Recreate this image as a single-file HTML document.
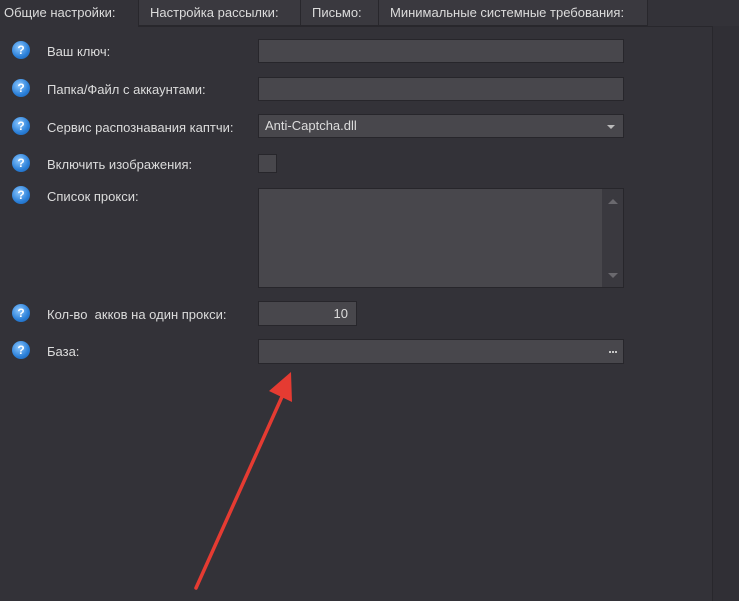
<!DOCTYPE html>
<html><head><meta charset="utf-8"><style>
body{margin:0;width:739px;height:601px;background:#333238;position:relative;overflow:hidden;font-family:"Liberation Sans",sans-serif;font-size:13px;color:#dcdcdc}
.a{position:absolute}
.tab{position:absolute;top:0;height:26px;background:#3a393f;border:1px solid #28272c;border-top:none;box-sizing:border-box;line-height:26px;padding-left:11px;color:#dcdcdc}
.in{position:absolute;background:#48474c;border:1px solid #27262b;box-sizing:border-box}
.q{position:absolute;left:12px;width:18px;height:18px;border-radius:50%;background:radial-gradient(circle at 40% 35%,#8cc8ff,#2a7fd8 60%,#1a5fb0);color:#fff;font-weight:bold;font-size:12px;text-align:center;line-height:18px}
.l{position:absolute;left:47px}
.d{position:absolute;top:11px;width:2px;height:2px;background:#c8c8c8}
</style></head><body>
<div class="a" style="left:0;top:0;width:739px;height:27px;background:#333238"></div>
<div class="a" style="left:0;top:0;width:138px;height:27px;line-height:26px;padding-left:4px;box-sizing:border-box">Общие настройки:</div>
<div class="tab" style="left:138px;width:163px">Настройка рассылки:</div>
<div class="tab" style="left:300px;width:79px">Письмо:</div>
<div class="tab" style="left:378px;width:270px">Минимальные системные требования:</div>
<div class="a" style="left:138px;top:26px;width:574px;height:1px;background:#28272c"></div>
<div class="a" style="left:712px;top:26px;width:1px;height:575px;background:#28272c"></div>
<div class="a" style="left:713px;top:26px;width:26px;height:575px;background:#302f35"></div>

<div class="q" style="top:41px">?</div><div class="l" style="top:44px">Ваш ключ:</div>
<div class="q" style="top:79px">?</div><div class="l" style="top:82px">Папка/Файл с аккаунтами:</div>
<div class="q" style="top:117px">?</div><div class="l" style="top:120px">Сервис распознавания каптчи:</div>
<div class="q" style="top:154px">?</div><div class="l" style="top:157px">Включить изображения:</div>
<div class="q" style="top:186px">?</div><div class="l" style="top:189px">Список прокси:</div>
<div class="q" style="top:304px">?</div><div class="l" style="top:307px">Кол-во &nbsp;акков на один прокси:</div>
<div class="q" style="top:341px">?</div><div class="l" style="top:344px">База:</div>

<div class="in" style="left:258px;top:39px;width:366px;height:24px"></div>
<div class="in" style="left:258px;top:77px;width:366px;height:24px"></div>
<div class="in" style="left:258px;top:114px;width:366px;height:24px;padding-left:6px;line-height:22px">Anti-Captcha.dll<span class="a" style="right:8px;top:10px;border:4px solid transparent;border-top:4px solid #bbb;border-bottom:none"></span></div>
<div class="in" style="left:258px;top:154px;width:19px;height:19px"></div>
<div class="in" style="left:258px;top:188px;width:366px;height:100px"><div class="a" style="right:0;top:0;width:21px;height:98px;background:#3a393f"></div>
<span class="a" style="right:5px;top:10px;border:5px solid transparent;border-bottom:5px solid #6a696e;border-top:none"></span>
<span class="a" style="right:5px;bottom:9px;border:5px solid transparent;border-top:5px solid #6a696e;border-bottom:none"></span></div>
<div class="in" style="left:258px;top:301px;width:99px;height:25px;text-align:right;padding-right:8px;line-height:23px">10</div>
<div class="in" style="left:258px;top:339px;width:366px;height:25px"><span class="d" style="right:6px"></span><span class="d" style="right:9px"></span><span class="d" style="right:12px"></span></div>

<svg class="a" style="left:0;top:0" width="739" height="601"><line x1="196" y1="588" x2="285" y2="390" stroke="#e53b32" stroke-width="3.5" stroke-linecap="round"/><polygon points="291,372 269,391 292,402" fill="#e53b32"/></svg>
</body></html>
